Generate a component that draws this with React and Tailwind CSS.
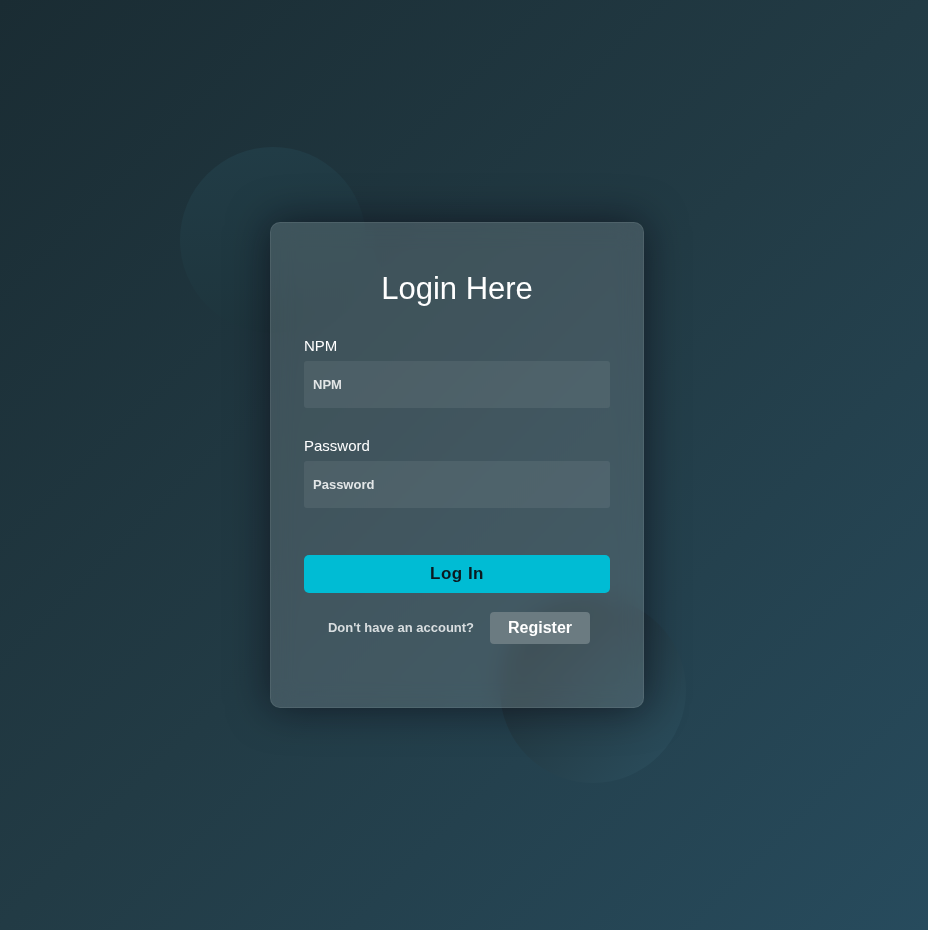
import { useState } from 'react';

export default function App() {
  const [npm, setNpm] = useState('');
  const [password, setPassword] = useState('');

  return (
    <div
      className="min-h-[930px] w-full flex items-center justify-center pr-[14px] bg-gradient-to-br from-[#1a2c33] via-[#223b45] to-[#274b5d]"
      style={{ fontFamily: '"Liberation Sans", Arial, sans-serif' }}
    >
      <div className="relative w-[374px] h-[486px]">
        {/* Background shapes */}
        <div className="absolute left-[-90px] top-[-75px] w-[186px] h-[186px] rounded-full bg-gradient-to-b from-[#213c46] to-[#1e353d]" />
        <div className="absolute left-[230px] top-[375px] w-[186px] h-[186px] rounded-full bg-gradient-to-br from-[#1d2d33] to-[#2b4f5f]" />

        {/* Card */}
        <form
          onSubmit={(e) => e.preventDefault()}
          className="relative h-full rounded-[10px] bg-white/[0.14] backdrop-blur-md border border-white/[0.08] shadow-[0_0_40px_rgba(8,7,16,0.6)] px-[33px] pt-[45px]"
        >
          <h3 className="text-[31px] leading-[42px] font-medium text-white text-center">Login Here</h3>

          <label className="block mt-[26px] text-[15px] leading-[20px] text-white">NPM</label>
          <input
            type="text"
            placeholder="NPM"
            value={npm}
            onChange={(e) => setNpm(e.target.value)}
            className="block w-full h-[47px] mt-[5px] rounded-[3px] bg-white/[0.07] px-[9px] text-[13px] font-bold text-white placeholder:text-[#e2e6e7] outline-none"
          />

          <label className="block mt-[28px] text-[15px] leading-[20px] text-white">Password</label>
          <input
            type="password"
            placeholder="Password"
            value={password}
            onChange={(e) => setPassword(e.target.value)}
            className="block w-full h-[47px] mt-[5px] rounded-[3px] bg-white/[0.07] px-[9px] text-[13px] font-bold text-white placeholder:text-[#e2e6e7] outline-none"
          />

          <button
            type="submit"
            className="block w-full h-[38px] mt-[47px] rounded-[5px] bg-[#00bcd4] text-[#0b1a20] text-[17px] font-bold tracking-[0.5px]"
          >
            Log In
          </button>

          <div className="flex items-center justify-center gap-[16px] mt-[19px] pl-[4px]">
            <span className="text-[13px] font-bold text-[#d9dee0]">Don't have an account?</span>
            <button
              type="button"
              className="w-[100px] h-[32px] rounded-[4px] bg-[#6b7b81] text-white text-[16px] font-bold"
            >
              Register
            </button>
          </div>
        </form>
      </div>
    </div>
  );
}
